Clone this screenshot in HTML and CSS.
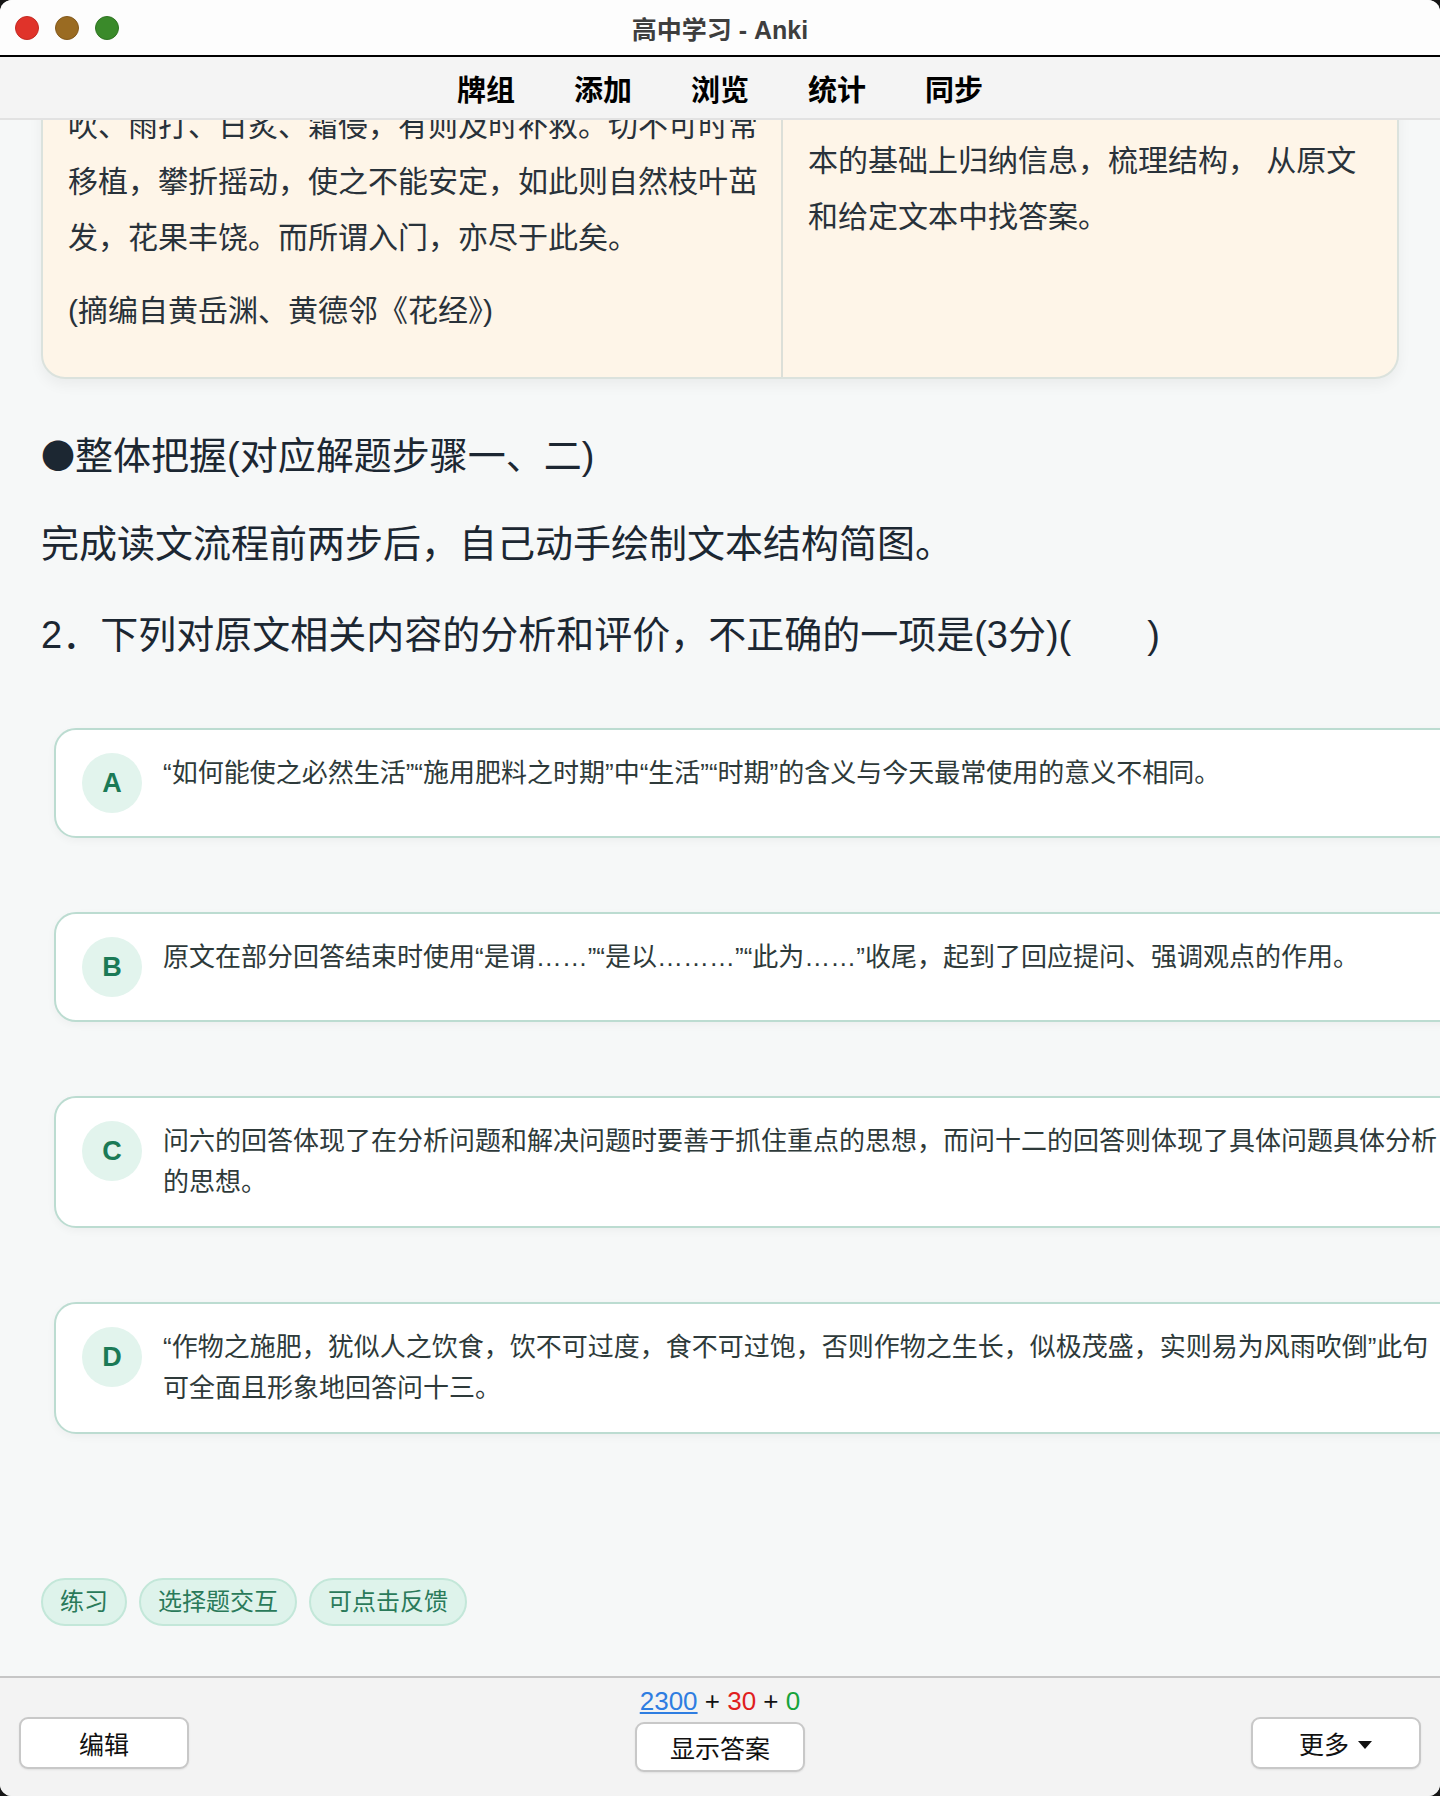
FILE: index.html
```html
<!DOCTYPE html>
<html lang="zh-CN">
<head>
  <meta charset="UTF-8" />
  <meta name="viewport" content="width=device-width, initial-scale=1.0"/>
  <title>高中学习 - Anki</title>
  <link rel="stylesheet" href="styles.css">
</head>
<body>
  <div class="window">
    <header class="titlebar">
      <div class="lights">
        <span class="light red"></span>
        <span class="light amber"></span>
        <span class="light green"></span>
      </div>
      <div class="title">高中学习 - Anki</div>
      <div></div>
    </header>

    <nav class="toolbar">
      <a>牌组</a>
      <a>添加</a>
      <a>浏览</a>
      <a>统计</a>
      <a>同步</a>
    </nav>

    <main class="reviewer">
      <div class="scroll">
        <section class="passage">
          <div class="col">
            <p>吹、雨打、日炙、霜侵，有则及时补救。切不可时常移植，攀折摇动，使之不能安定，如此则自然枝叶茁发，花果丰饶。而所谓入门，亦尽于此矣。</p>
            <p class="source">(摘编自黄岳渊、黄德邻《花经》)</p>
          </div>
          <div class="col col-side">
            <p>本的基础上归纳信息，梳理结构， 从原文和给定文本中找答案。</p>
          </div>
        </section>

        <h3 class="step"><span class="bullet">●</span>整体把握(对应解题步骤一、二)</h3>
        <p class="task">完成读文流程前两步后，自己动手绘制文本结构简图。</p>
        <p class="task question">2．下列对原文相关内容的分析和评价，不正确的一项是(3分)(　　)</p>

        <ul class="options">
          <li class="option">
            <span class="letter">A</span>
            <span class="option-text">“如何能使之必然生活”“施用肥料之时期”中“生活”“时期”的含义与今天最常使用的意义不相同。</span>
          </li>
          <li class="option">
            <span class="letter">B</span>
            <span class="option-text">原文在部分回答结束时使用“是谓……”“是以………”“此为……”收尾，起到了回应提问、强调观点的作用。</span>
          </li>
          <li class="option">
            <span class="letter">C</span>
            <span class="option-text">问六的回答体现了在分析问题和解决问题时要善于抓住重点的思想，而问十二的回答则体现了具体问题具体分析的思想。</span>
          </li>
          <li class="option">
            <span class="letter">D</span>
            <span class="option-text">“作物之施肥，犹似人之饮食，饮不可过度，食不可过饱，否则作物之生长，似极茂盛，实则易为风雨吹倒”此句可全面且形象地回答问十三。</span>
          </li>
        </ul>

        <div class="tags">
          <span class="tag">练习</span>
          <span class="tag">选择题交互</span>
          <span class="tag">可点击反馈</span>
        </div>
      </div>
    </main>

    <footer class="bottombar">
      <button class="btn">编辑</button>
      <div class="middle">
        <div class="counts"><span class="new">2300</span> + <span class="learn">30</span> + <span class="due">0</span></div>
        <button class="btn btn-main">显示答案</button>
      </div>
      <button class="btn">更多<svg class="caret" width="16" height="10" viewBox="0 0 16 10"><path d="M1 1 L15 1 L8 9 Z" fill="#111"/></svg></button>
    </footer>
  </div>
</body>
</html>
```

FILE: styles.css
```css
* {
  box-sizing: border-box;
}

html, body {
  margin: 0;
}

body {
  background: #161616;
  font-family: "Liberation Sans", "Noto Sans CJK SC", sans-serif;
  color: #25313b;
}

.window {
  width: 1440px;
  height: 1796px;
  display: flex;
  flex-direction: column;
  border-radius: 12px;
  overflow: hidden;
  background: #f6f8f8;
}

/* Title bar */
.titlebar {
  flex: none;
  height: 57px;
  padding: 0 15px;
  background: #fdfdfd;
  border-bottom: 2px solid #000;
  display: grid;
  grid-template-columns: 1fr auto 1fr;
  align-items: center;
}

.lights {
  display: flex;
  gap: 16px;
}

.light {
  width: 24px;
  height: 24px;
  border-radius: 50%;
}

.red { background: #e0332a; border: 1px solid #c42a22; }
.amber { background: #9a6b22; border: 1px solid #83591b; }
.green { background: #3a8a2a; border: 1px solid #2f7422; }

.title {
  font-size: 25px;
  font-weight: 700;
  color: #3e3e3e;
}

/* Toolbar */
.toolbar {
  flex: none;
  height: 63px;
  background: #f4f4f4;
  border-bottom: 2px solid #e2e2e2;
  display: flex;
  justify-content: center;
  align-items: center;
  gap: 59px;
}

.toolbar a {
  font-family: "Noto Sans CJK SC", sans-serif;
  font-size: 29px;
  font-weight: 700;
  color: #000;
}

/* Card area */
.reviewer {
  flex: 1;
  overflow: hidden;
  padding: 0 41px;
}

.scroll {
  margin-top: -53px;
}

.passage {
  display: grid;
  grid-template-columns: 738px 1fr;
  background: #fef5e8;
  border: 2px solid #dbe2dd;
  border-radius: 24px;
  box-shadow: 0 6px 14px rgba(0, 0, 0, 0.05);
  font-size: 30px;
  line-height: 56px;
  color: #29323a;
}

.passage p {
  margin: 0;
}

.col {
  padding: 29px 20px 38px 25px;
}

.col-side {
  padding: 64px 29px 38px 25px;
  border-left: 2px solid #dcdfd8;
}

.passage .source {
  margin-top: 17px;
}

.step,
.task {
  margin: 36px 0 0;
  font-size: 38px;
  line-height: 52px;
  font-weight: 400;
  color: #1c2732;
}

.step {
  margin-top: 50px;
}

.bullet {
  font-family: "Noto Sans CJK SC", sans-serif;
  font-size: 34px;
}

.question {
  margin-top: 39px;
}

/* Options */
.options {
  list-style: none;
  padding: 0;
  margin: 67px 0 0 13px;
  width: 1412px;
  display: flex;
  flex-direction: column;
  gap: 74px;
}

.option {
  display: flex;
  align-items: flex-start;
  gap: 21px;
  padding: 23px 24px 23px 26px;
  background: #fff;
  border: 2px solid #bcdcd1;
  border-radius: 22px;
  box-shadow: 0 3px 8px rgba(0, 0, 0, 0.04);
}

.letter {
  flex: none;
  width: 60px;
  height: 60px;
  border-radius: 50%;
  background: #e2f4ed;
  color: #1b7a56;
  font-weight: 700;
  font-size: 27px;
  display: flex;
  align-items: center;
  justify-content: center;
}

.option-text {
  font-size: 26px;
  line-height: 41px;
  color: #2e3a3a;
}

/* Tags */
.tags {
  margin-top: 144px;
  display: flex;
  gap: 12px;
}

.tag {
  height: 48px;
  padding: 0 17px;
  border: 2px solid #c3e7d9;
  border-radius: 24px;
  background: #def3eb;
  color: #2a7a5a;
  font-size: 24px;
  line-height: 44px;
}

/* Bottom bar */
.bottombar {
  flex: none;
  height: 120px;
  background: #f3f3f3;
  border-top: 2px solid #c6c6c6;
  padding: 8px 19px 0;
  display: flex;
  justify-content: space-between;
  align-items: flex-start;
}

.btn {
  width: 170px;
  height: 52px;
  margin-top: 31px;
  background: #fff;
  border: 2px solid #c8c8c8;
  border-radius: 9px;
  box-shadow: 0 1px 2px rgba(0, 0, 0, 0.08);
  font-family: "Noto Sans CJK SC", sans-serif;
  font-size: 25px;
  color: #111;
  display: flex;
  align-items: center;
  justify-content: center;
  gap: 8px;
}

.middle {
  display: flex;
  flex-direction: column;
  align-items: center;
}

.counts {
  font-size: 26px;
  line-height: 30px;
  color: #111;
}

.counts .new {
  color: #2e7de1;
  text-decoration: underline;
}

.counts .learn { color: #e01e1e; }
.counts .due { color: #17a33b; }

.btn-main {
  margin-top: 6px;
  height: 50px;
}

.caret {
  margin-top: 4px;
}
```
